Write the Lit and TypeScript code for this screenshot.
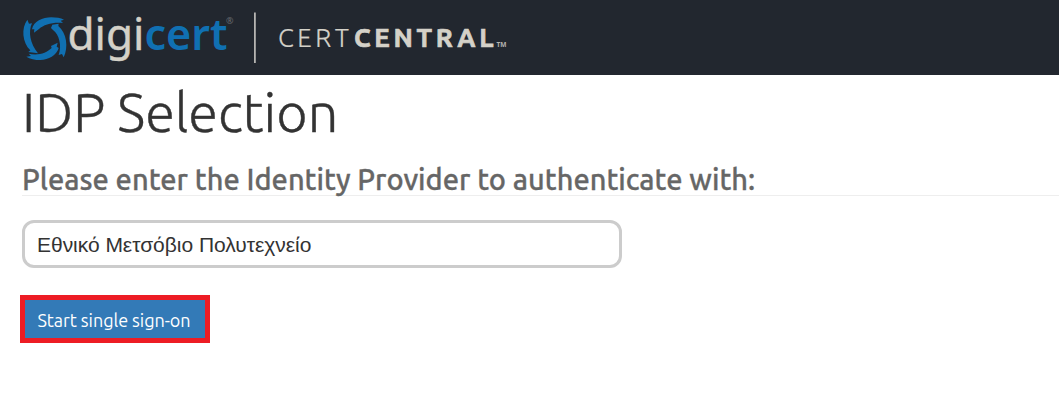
import { LitElement, html, css } from "lit";
import { customElement, property } from "lit/decorators.js";

@customElement("brand-logo")
class BrandLogo extends LitElement {
  static styles = css`
    :host { display: block; height: 75px; }
    svg { display: block; }
    text { font-family: "Noto Sans", "Open Sans", sans-serif; }
    .mark { fill: #1070b2; }
    .light { fill: #d4d1c8; }
    .blue { fill: #1070b2; font-weight: 600; }
    .reg { fill: #6a6c70; font-size: 9px; }
    .name { font-size: 43px; }
    .name.light { stroke: #d4d1c8; stroke-width: 0.4px; }
    .product { font-family: Ubuntu, "Noto Sans", sans-serif; font-size: 26px; }
    .thin { font-weight: 300; stroke: #d4d1c8; stroke-width: 0.2px; }
    .heavy { font-weight: 700; stroke: #d4d1c8; stroke-width: 0.7px; }
    .tm { fill: #b4b3af; font-size: 6.5px; font-weight: 700; }
  `;
  render() {
    return html`
      <svg width="520" height="75" viewBox="0 0 520 75" role="img" aria-label="digicert certcentral">
        <g class="mark" transform="translate(18 12) scale(.33333)">
          <path d="M48 62 L49 52 L42 52 C46 28 74 16 100 16 C114 16 128 18 138 23 L128 26 L135 33 C103 30 78 38 63 51 Z" />
          <path d="M28 23 L33 35 L42 34 C30 59 36 96 60 124 L31 120 L37 115 C13 91 9 49 28 23 Z" />
          <path d="M25 134 L39 132 L32 125 C60 132 86 123 101 108 L99 102 L119 92 L116 104 L122 108 C115 131 92 143 67 144 C51 144 36 141 25 134 Z" />
          <path d="M99 48 L103 38 L122 35 L121 42 C146 63 152 106 137 136 L132 126 L122 129 C132 102 124 68 105 54 Z" />
        </g>
        <text class="name light" x="67.500" y="50" textLength="77" lengthAdjust="spacingAndGlyphs">digi</text>
        <text class="name blue" x="144.500" y="50" textLength="83" lengthAdjust="spacingAndGlyphs">cert</text>
        <text class="reg" x="226" y="23.500">®</text>
        <rect x="254" y="12.500" width="1.800" height="50.500" fill="#b5b4b1" />
        <text class="product thin light" x="278" y="47" textLength="71">CERT</text>
        <text class="product heavy light" x="354" y="47" textLength="139.500" lengthAdjust="spacing">CENTRAL</text>
        <text class="tm" x="496.500" y="46.500" textLength="10" lengthAdjust="spacingAndGlyphs">TM</text>
      </svg>
    `;
  }
}

@customElement("app-root")
class AppRoot extends LitElement {
  @property() provider = "Εθνικό Μετσόβιο Πολυτεχνείο";

  static styles = css`
    :host {
      display: block;
      min-height: 418px;
      background: #fff;
      color: #333;
      font-family: Ubuntu, "Noto Sans", "Open Sans", sans-serif;
    }
    header { height: 75px; background: #22272f; }
    main { display: flex; flex-direction: column; align-items: flex-start; padding-left: 22px; }
    h1 {
      margin: 6px 0 0;
      font-size: 54px;
      line-height: 62px;
      font-weight: 300;
      -webkit-text-stroke: 0.4px #333;
      white-space: nowrap;
    }
    h2 {
      align-self: stretch;
      box-sizing: border-box;
      height: 36px;
      margin: 17px 0 24px;
      border-bottom: 1px solid #eee;
      color: #666;
      font-size: 29px;
      line-height: 38px;
      font-weight: 500;
      -webkit-text-stroke: 0.3px #666;
      white-space: nowrap;
    }
    input {
      box-sizing: border-box;
      width: 600px;
      height: 48px;
      margin: 0;
      padding: 2px 12px 0;
      border: 3px solid #ccc;
      border-radius: 12px;
      background: #fff;
      color: #333;
      font: 21px "Liberation Sans", Arial, sans-serif;
      letter-spacing: -0.03px;
      outline: none;
    }
    button {
      width: 190px;
      height: 48px;
      margin: 27px 0 0 -2px;
      padding: 2px 2px 0 0;
      border: 5px solid #ed1c24;
      background: #337ab7;
      color: #fff;
      font: 400 18px Ubuntu, "Noto Sans", sans-serif;
      letter-spacing: -0.05px;
      white-space: nowrap;
    }
  `;
  render() {
    return html`
      <header><brand-logo></brand-logo></header>
      <main>
        <h1>IDP Selection</h1>
        <h2>Please enter the Identity Provider to authenticate with:</h2>
        <input type="text" .value=${this.provider} aria-label="Identity Provider" />
        <button type="button">Start single sign-on</button>
      </main>
    `;
  }
}
